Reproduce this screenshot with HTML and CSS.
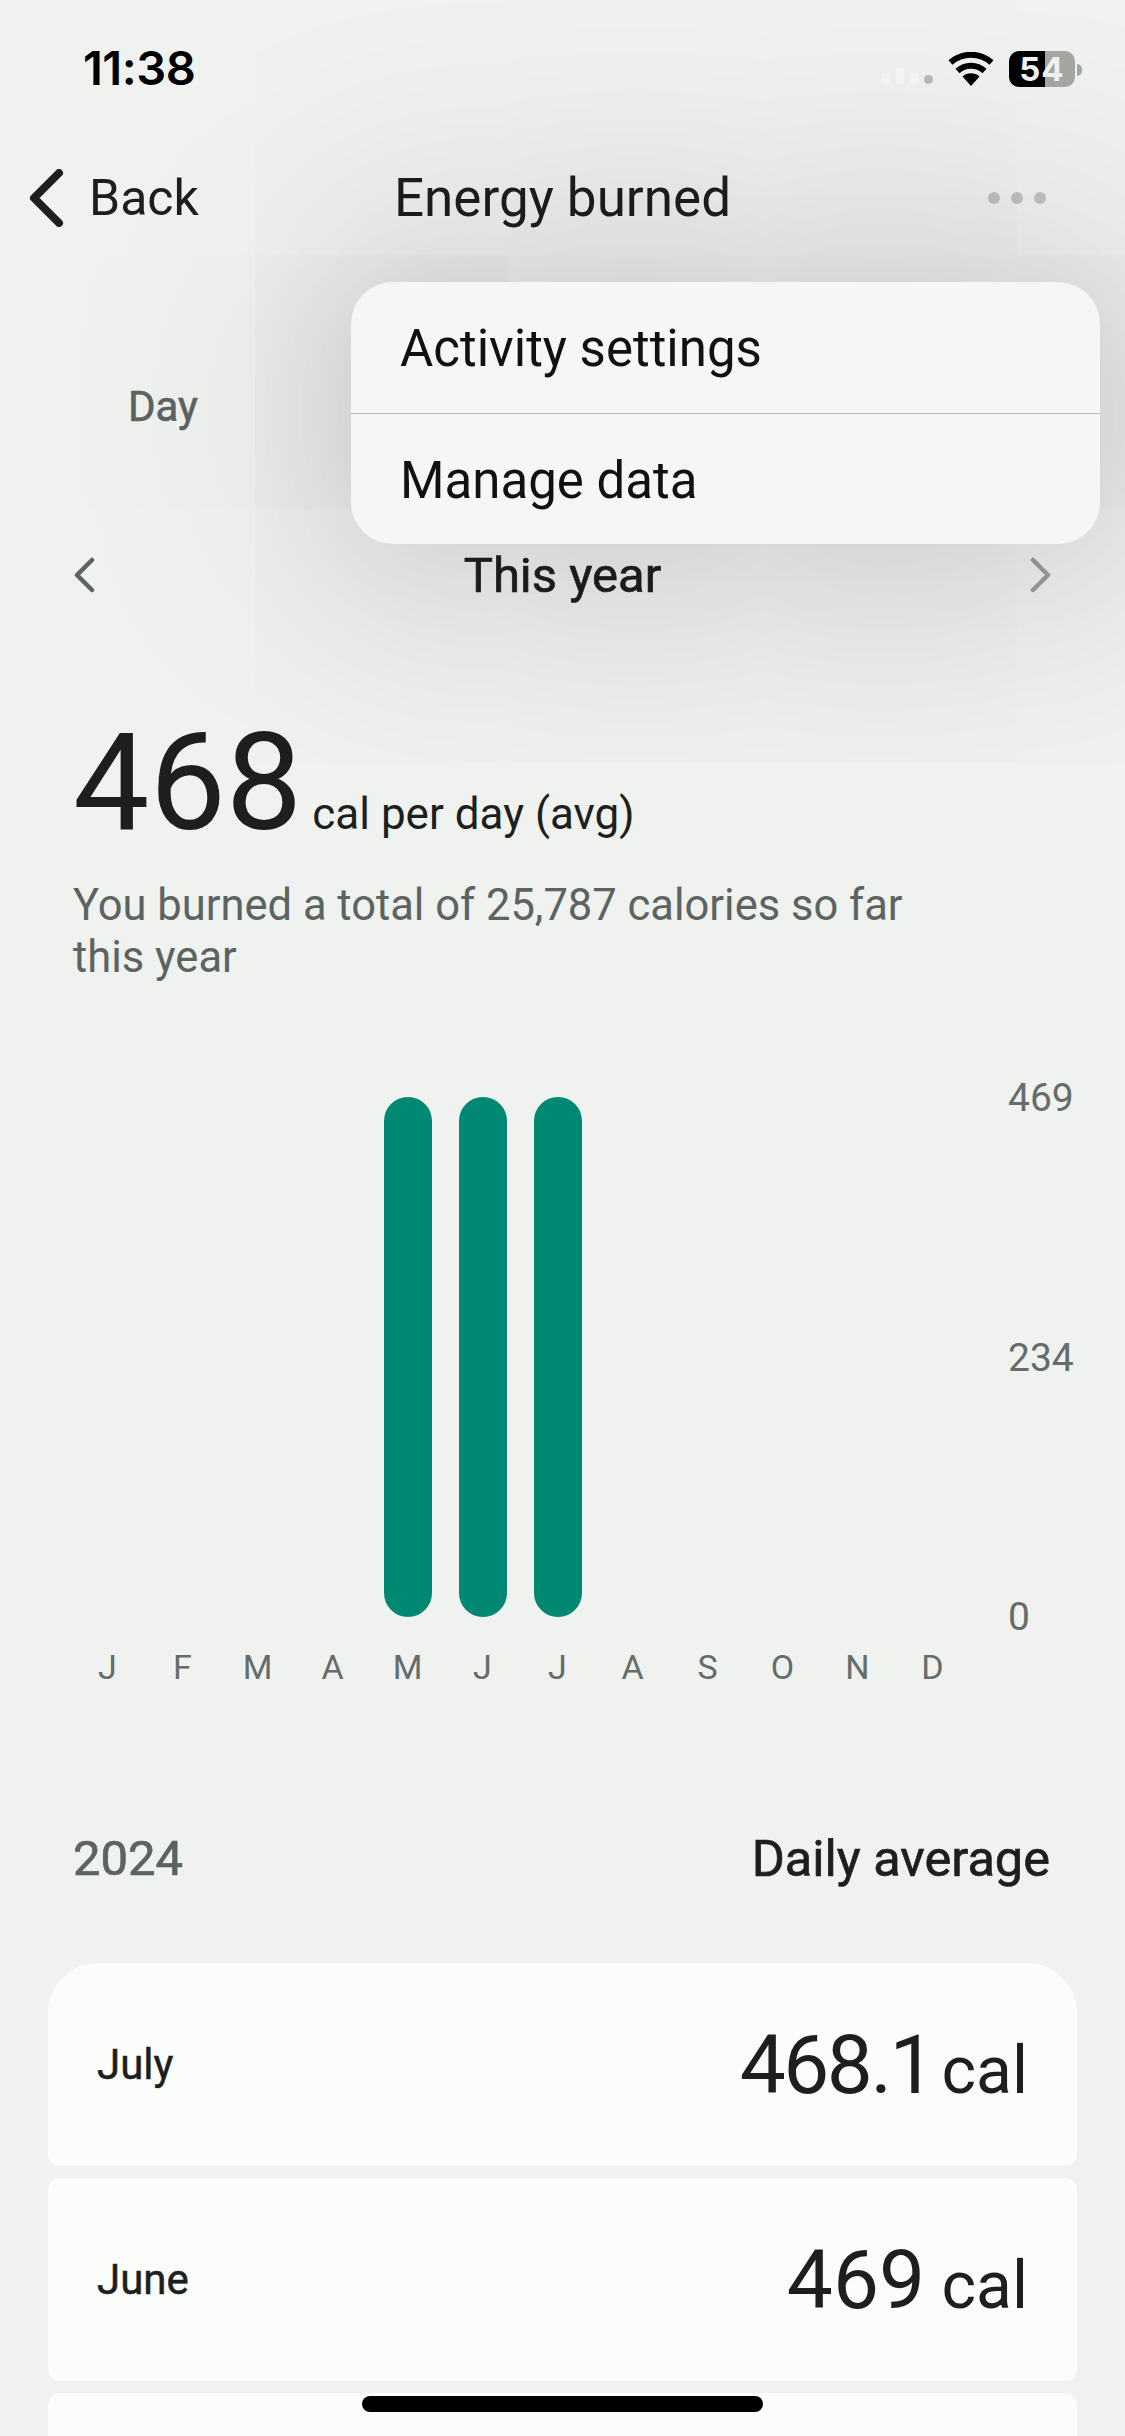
FILE: index.html
```html
<!DOCTYPE html>
<html lang="en">
<head>
<meta charset="utf-8">
<title>Energy burned</title>
<link rel="stylesheet" href="styles.css">
</head>
<body>
<div class="screen">
  <header class="status">
    <span class="time">11:38</span>
    <div class="status-icons">
      <div class="signal"><i class="b1"></i><i class="b2"></i><i class="b3"></i><i class="b4"></i></div>
      <svg class="wifi" viewBox="0 0 46 34" width="46" height="34"><path d="M23 34 L14.5 24.5 A13 13 0 0 1 31.5 24.5 Z" fill="#000"/><path d="M9.5 19 A20 20 0 0 1 36.5 19" fill="none" stroke="#000" stroke-width="6"/><path d="M2.5 10.5 A31 31 0 0 1 43.500 10.500" fill="none" stroke="#000" stroke-width="6"/></svg>
      <div class="battery"><span class="batt-text">54</span></div>
      <span class="nub"></span>
    </div>
  </header>

  <nav class="nav">
    <div class="back">
      <svg class="back-icon" viewBox="0 0 36 58" width="36" height="58"><path d="M31 4 L6 29 L31 54" fill="none" stroke="#1d1f1e" stroke-width="8" stroke-linecap="round" stroke-linejoin="round"/></svg>
      <span>Back</span>
    </div>
    <h1 class="title">Energy burned</h1>
    <div class="dots"><i></i><i></i><i></i></div>
  </nav>

  <div class="tabs"><span class="tab">Day</span></div>

  <div class="period">
    <svg viewBox="0 0 24 36" width="24" height="36"><path d="M20 3 L5 18 L20 33" fill="none" stroke="#5c6361" stroke-width="4.500" stroke-linecap="round" stroke-linejoin="round"/></svg>
    <span class="period-label">This year</span>
    <svg viewBox="0 0 24 36" width="24" height="36"><path d="M4 3 L19 18 L4 33" fill="none" stroke="#9a9f9d" stroke-width="4.500" stroke-linecap="round" stroke-linejoin="round"/></svg>
  </div>

  <section class="summary">
    <div class="headline"><span class="big">468</span><span class="unit">cal per day (avg)</span></div>
    <p class="note">You burned a total of 25,787 calories so far<br>this year</p>
  </section>

  <section class="chart">
    <div class="plot">
      <div class="cols">
        <div class="col"></div><div class="col"></div><div class="col"></div><div class="col"></div>
        <div class="col"><div class="bar"></div></div>
        <div class="col"><div class="bar"></div></div>
        <div class="col"><div class="bar"></div></div>
        <div class="col"></div><div class="col"></div><div class="col"></div><div class="col"></div><div class="col"></div>
      </div>
      <div class="months">
        <span>J</span><span>F</span><span>M</span><span>A</span><span>M</span><span>J</span><span>J</span><span>A</span><span>S</span><span>O</span><span>N</span><span>D</span>
      </div>
    </div>
    <div class="axis"><span>469</span><span>234</span><span>0</span></div>
  </section>

  <div class="list-head"><span class="year">2024</span><span class="avg">Daily average</span></div>

  <section class="cards">
    <div class="card first"><span class="month">July</span><span class="value tight"><b>468.1</b> <small>cal</small></span></div>
    <div class="card"><span class="month">June</span><span class="value"><b>469</b> <small>cal</small></span></div>
    <div class="card"></div>
  </section>

  <div class="menu">
    <div class="menu-item">Activity settings</div>
    <div class="menu-item">Manage data</div>
  </div>
  <div class="home"></div>
</div>
</body>
</html>
```

FILE: styles.css
```css
* { box-sizing: border-box; margin: 0; padding: 0; }
html, body { width: 1125px; height: 2436px; overflow: hidden; }
body { background: #eff2ef; font-family: Roboto, "Open Sans", sans-serif; color: #1d1f1e; }
.screen { position: relative; width: 1125px; height: 2436px; overflow: hidden; background: #eff2ef; }

.status { height: 136px; display: flex; justify-content: space-between; align-items: flex-start; padding: 42px 43px 0 83px; }
.time { font-family: Inter, sans-serif; font-size: 47px; line-height: 52px; font-weight: 600; color: #000; letter-spacing: -.5px; }
.status-icons { display: flex; align-items: flex-start; padding-top: 9px; }
.signal { display: flex; align-items: flex-end; gap: 6px; height: 33px; width: 66px; }
.signal i { display: block; width: 8px; background: #f7f9f7; border-radius: 2px; }
.signal .b1 { height: 11px; }
.signal .b2 { height: 16px; }
.signal .b3 { height: 11px; }
.signal .b4 { width: 9px; height: 9px; border-radius: 50%; background: #b8bbb9; }
.wifi { margin-top: 1px; }
.battery { width: 66px; height: 36px; margin-left: 15px; border-radius: 10px; background: linear-gradient(90deg, #000 0 36px, #a5a7a5 36px); color: #f2f2f2; display: flex; align-items: center; justify-content: center; }
.batt-text { font-family: Inter, sans-serif; font-size: 33px; font-weight: 700; line-height: 36px; letter-spacing: 1px; }
.nub { width: 5px; height: 12px; margin: 13px 0 0 2px; background: #a5a7a5; border-radius: 0 6px 6px 0; }

.nav { height: 124px; display: grid; grid-template-columns: 1fr auto 1fr; align-items: center; padding: 0 28px; }
.back { display: flex; align-items: center; gap: 25px; font-size: 50px; }
.title { font-size: 53px; font-weight: 400; line-height: 60px; }
.dots { justify-self: end; display: flex; gap: 11px; margin-right: 51px; }
.dots i { width: 12px; height: 12px; border-radius: 50%; background: #bfc2c0; }

.tabs { height: 285px; padding: 123px 0 0 128px; }
.tab { font-size: 42px; color: #5c6361; line-height: 48px; -webkit-text-stroke: .6px #5c6361; }

.period { display: flex; justify-content: space-between; align-items: center; height: 60px; padding: 0 72px; }
.period-label { font-size: 49px; -webkit-text-stroke: .7px #1d1f1e; }

.summary { padding: 108px 73px 0; }
.headline { display: flex; align-items: baseline; gap: 10px; }
.big { font-size: 136px; line-height: 140px; }
.unit { font-size: 44px; }
.note { margin-top: 27px; font-size: 43.500px; line-height: 52px; color: #5c6361; }

.chart { position: relative; display: flex; margin-top: 113px; padding-left: 70px; }
.plot { width: 900px; }
.cols { display: grid; grid-template-columns: repeat(12, 75px); height: 520px; }
.col { display: flex; justify-content: center; }
.bar { width: 48px; height: 520px; border-radius: 24px; background: #008873; }
.months { display: grid; grid-template-columns: repeat(12, 75px); margin-top: 30px; font-size: 34px; line-height: 40px; color: #656c6a; text-align: center; }
.axis { position: absolute; left: 1008px; top: -19px; display: flex; flex-direction: column; justify-content: space-between; height: 559px; font-size: 39px; line-height: 40px; color: #656c6a; }

.list-head { display: flex; justify-content: space-between; align-items: center; margin-top: 142px; padding: 0 75px 0 73px; font-size: 50px; line-height: 60px; }
.year { color: #5c6361; font-size: 49px; -webkit-text-stroke: .7px #5c6361; }
.avg { font-size: 50.500px; -webkit-text-stroke: .7px #1d1f1e; }

.cards { display: flex; flex-direction: column; gap: 12px; margin-top: 74px; padding: 0 48px; }
.card { height: 203px; flex: none; background: #fbfdfa; border-radius: 12px; display: flex; align-items: center; justify-content: space-between; padding: 0 49px; }
.card.first { border-radius: 50px 50px 12px 12px; }
.month { font-size: 42px; -webkit-text-stroke: .5px #1d1f1e; }
.value { font-size: 66px; }
.value b { font-size: 82px; font-weight: 400; }
.value.tight { word-spacing: -8px; }
.value.tight b { letter-spacing: -2.500px; }
.value small { font-size: 66px; }

.menu { position: absolute; left: 351px; top: 282px; width: 749px; border-radius: 42px; background: #f6f7f4; box-shadow: 0 0 320px 50px rgba(0,0,0,.16), 0 0 120px 0 rgba(0,0,0,.06); }
.menu-item { height: 131px; display: flex; align-items: center; padding: 2px 0 0 49px; font-size: 51px; color: #111; }
.menu-item + .menu-item { border-top: 1px solid #b5b7b5; }
.home { position: absolute; left: 362px; top: 2396px; width: 401px; height: 16px; border-radius: 8px; background: #000; }
```
